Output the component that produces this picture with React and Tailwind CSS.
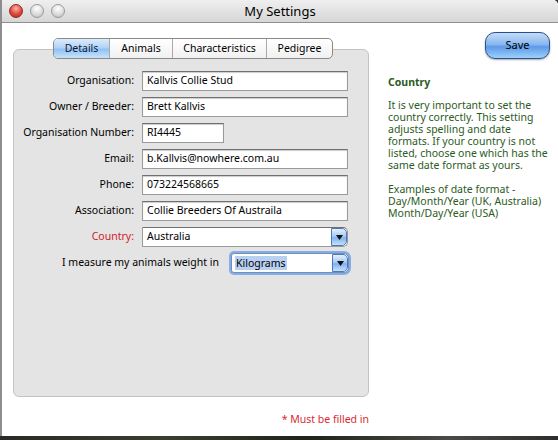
import React from "react";

function Field({ value, w = "w-[206px]" }) {
  return (
    <div className={`${w} h-[20px] bg-white border border-[#9a9a9a] border-t-[#707070] shadow-[inset_0_1px_1px_rgba(0,0,0,0.2)] pl-[4px] flex items-center text-[10.5px] text-black whitespace-nowrap`}>
      {value}
    </div>
  );
}

function Arrow() {
  return (
    <div className="w-[16px] h-full rounded-r-[5px] border border-[#4f79b4] bg-[linear-gradient(#e3effd,#a8cbf4_45%,#7fb1ef_55%,#c7e1fb)] flex items-center justify-center">
      <svg width="7" height="5" viewBox="0 0 7 5"><path d="M0 0h7L3.5 5z" fill="#111" /></svg>
    </div>
  );
}

const labels = [
  ["Organisation:", "Kallvis Collie Stud"],
  ["Owner / Breeder:", "Brett Kallvis"],
  ["Organisation Number:", "RI4445", "w-[82px]"],
  ["Email:", "b.Kallvis@nowhere.com.au"],
  ["Phone:", "073224568665"],
  ["Association:", "Collie Breeders Of Austraila"],
];

export default function App() {
  return (
    <div className="w-[558px] h-[440px] overflow-hidden bg-[linear-gradient(90deg,#2a2a26,#3a3e2c_30%,#1e2418_55%,#4a4a46_80%,#2d2d2d)] font-['Noto_Sans',sans-serif]">
      <div className="h-[436px] bg-white border-l-2 border-[#8d8d8d] rounded-tr-[5px] flex flex-col">
        {/* title bar */}
        <div className="h-[23px] shrink-0 grid grid-cols-[1fr_auto_1fr] items-center bg-[linear-gradient(#efefef,#d6d6d6)] border-b border-[#8f8f8f] rounded-tr-[5px]">
          <div className="flex gap-[7px] pl-[7px]">
            <span className="w-[14px] h-[14px] rounded-full border border-[#8e2a24] bg-[radial-gradient(circle_at_50%_30%,#ffb3a8,#e0463b_55%,#b3261e)]" />
            <span className="w-[14px] h-[14px] rounded-full border border-[#9a9a9a] bg-[radial-gradient(circle_at_50%_30%,#ffffff,#dcdcdc_55%,#b9b9b9)]" />
            <span className="w-[14px] h-[14px] rounded-full border border-[#9a9a9a] bg-[radial-gradient(circle_at_50%_30%,#ffffff,#dcdcdc_55%,#b9b9b9)]" />
          </div>
          <div className="text-[13px] text-black leading-none">My Settings</div>
          <div />
        </div>

        {/* body */}
        <div className="flex flex-1">
          {/* left column */}
          <div className="w-[380px] pl-[11px] pt-[15px] flex flex-col">
            <div className="relative z-10 pl-[40px] flex">
              <div className="flex h-[21px] border border-[#8a8a8a] rounded-[5px] overflow-hidden bg-[linear-gradient(#ffffff,#f1f1f1)] text-[10.5px] text-black">
                <div className="w-[55px] flex items-center justify-center bg-[linear-gradient(#dcebfc,#b0d1f6_48%,#8fbff3_52%,#c9e3fb)] text-[#0c1a36]">Details</div>
                <div className="w-[63px] flex items-center justify-center border-l border-[#a9a9a9]">Animals</div>
                <div className="w-[94px] flex items-center justify-center border-l border-[#a9a9a9]">Characteristics</div>
                <div className="w-[66px] flex items-center justify-center border-l border-[#a9a9a9]">Pedigree</div>
              </div>
            </div>
            <div className="-mt-[10px] w-[356px] h-[348px] bg-[#e4e4e4] border border-[#c3c3c3] rounded-[6px] pt-[21px] pl-[6px]">
              <div className="grid grid-cols-[114px_206px] gap-x-[8px] gap-y-[6px] items-center text-[10.5px] text-black">
                {labels.map(([l, v, w]) => (
                  <React.Fragment key={l}>
                    <div className="text-right whitespace-nowrap">{l}</div>
                    <Field value={v} w={w} />
                  </React.Fragment>
                ))}
                <div className="text-right text-[#d0202a]">Country:</div>
                <div className="h-[20px] bg-white border border-[#9a9a9a] border-t-[#707070] rounded-r-[5px] flex items-stretch">
                  <div className="flex-1 pl-[4px] flex items-center">Australia</div>
                  <Arrow />
                </div>
                <div className="col-span-2 flex justify-end items-center gap-[12px]">
                  <span>I measure my animals weight in</span>
                  <div className="w-[118px] h-[20px] mr-[-1px] rounded-[3px] shadow-[0_0_0_2px_#86aee4] bg-white border border-[#6f8fbf] rounded-r-[5px] flex items-stretch">
                    <div className="flex-1 pl-[3px] flex items-center">
                      <span className="bg-[#b8d0f1] px-[1px] leading-[14px]">Kilograms</span>
                    </div>
                    <Arrow />
                  </div>
                </div>
              </div>
            </div>
            <div className="w-[356px] text-right text-[10.5px] text-[#dc2a32] mt-[15px]">* Must be filled in</div>
          </div>

          {/* right column */}
          <div className="flex-1 flex flex-col">
            <div className="flex justify-end pr-[8px] pt-[9px]">
              <button className="w-[65px] h-[27px] rounded-[10px] border border-[#2c4f8e] bg-[linear-gradient(#c4dcf8,#8ab8ef_45%,#5d9ae8_55%,#9cd0fb)] shadow-[0_1px_2px_rgba(0,0,0,0.35)] text-[11px] text-black">
                Save
              </button>
            </div>
            <div className="pl-[6px] pt-[17px] text-[10.5px] leading-[12px] text-[#2a5b1d]">
              <div className="font-bold">Country</div>
              <div className="mt-[11px]">
                It is very important to set the<br />
                country correctly. This setting<br />
                adjusts spelling and date<br />
                formats. If your country is not<br />
                listed, choose one which has the<br />
                same date format as yours.
              </div>
              <div className="mt-[12px]">
                Examples of date format -<br />
                Day/Month/Year (UK, Australia)<br />
                Month/Day/Year (USA)
              </div>
            </div>
          </div>
        </div>
      </div>
    </div>
  );
}
